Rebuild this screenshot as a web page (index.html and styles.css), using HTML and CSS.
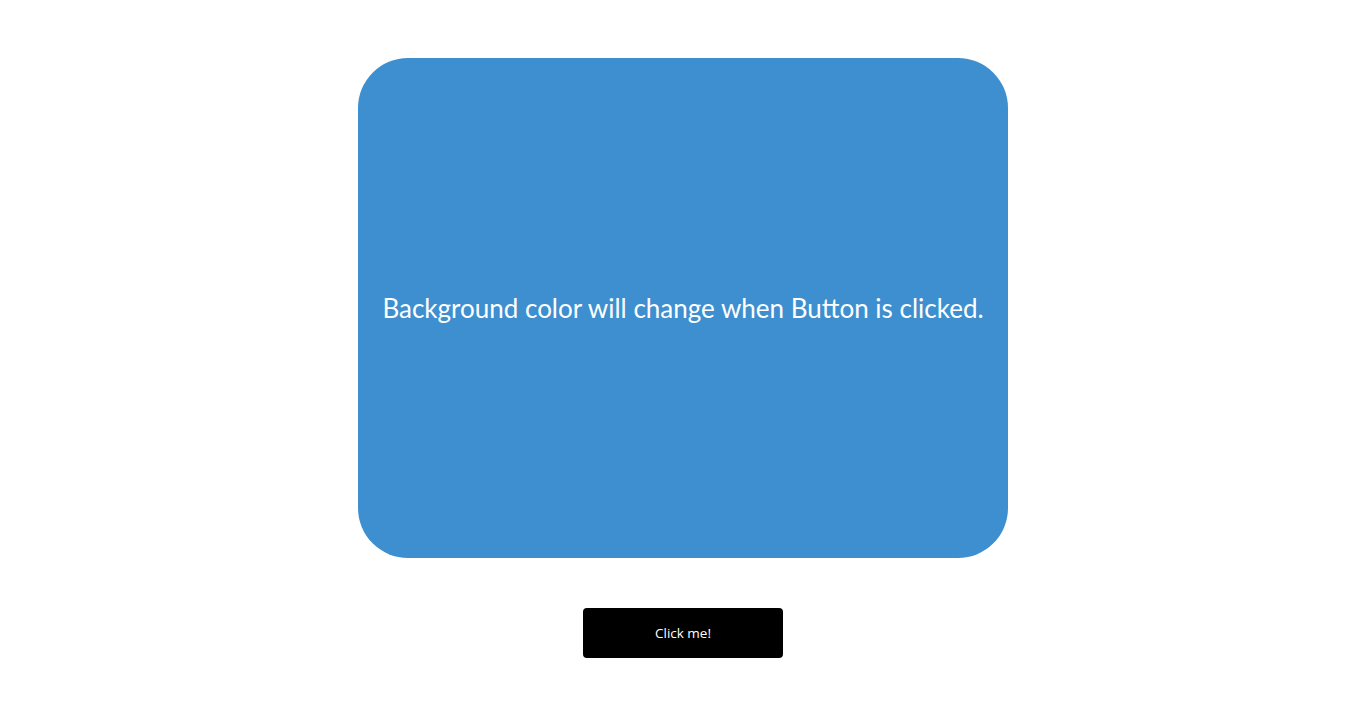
FILE: index.html
```html
<!DOCTYPE html>
<html>
<head>
<meta charset="utf-8">
<link rel="stylesheet" href="styles.css">
</head>
<body>
<main class="page">
  <div class="box">
    <p class="message">Background color will change when Button is clicked.</p>
  </div>
  <button class="btn">Click me!</button>
</main>
</body>
</html>
```
FILE: styles.css
```css
html, body {
  margin: 0;
  padding: 0;
  background: #ffffff;
}
.page {
  display: flex;
  flex-direction: column;
  align-items: center;
  padding-top: 58px;
  gap: 50px;
}
.box {
  width: 650px;
  height: 500px;
  background: #3d8fd0;
  border-radius: 50px;
  display: flex;
  align-items: center;
  justify-content: center;
}
.message {
  margin: 0;
  color: #ffffff;
  font-family: "Lato", "DejaVu Sans", sans-serif;
  font-size: 26px;
  line-height: 1;
}
.btn {
  width: 200px;
  height: 50px;
  background: #000000;
  color: #ffffff;
  border: none;
  border-radius: 4px;
  font-family: "Open Sans", "Noto Sans", sans-serif;
  font-size: 13.5px;
  padding: 0;
  cursor: pointer;
}
```
